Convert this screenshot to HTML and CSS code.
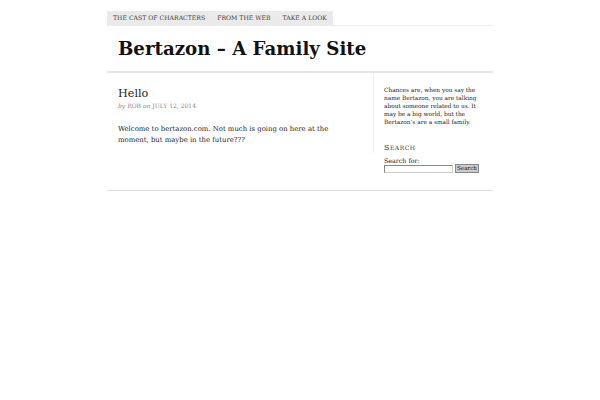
FILE: index.html
```html
<!DOCTYPE html>
<html>
<head>
<meta charset="utf-8">
<link rel="stylesheet" href="styles.css">
</head>
<body>
<div class="wrap">
  <nav class="nav">
    <a class="tab">The Cast of Characters</a>
    <a class="tab">From the Web</a>
    <a class="tab">Take a Look</a>
  </nav>
  <header class="header">
    <h1 class="title">Bertazon – A Family Site</h1>
  </header>
  <div class="main">
    <div class="content">
      <h2 class="post-title">Hello</h2>
      <div class="meta"><em>by</em> ROB <em>on</em> JULY 12, 2014</div>
      <p class="body">Welcome to bertazon.com. Not much is going on here at the moment, but maybe in the future???</p>
    </div>
    <aside class="sidebar">
      <p class="about">Chances are, when you say the name Bertazon, you are talking about someone related to us. It may be a big world, but the Bertazon’s are a small family.</p>
      <h3 class="widget-title">Search</h3>
      <div class="label">Search for:</div>
      <div class="search"><span class="input"></span><span class="btn">Search</span></div>
    </aside>
  </div>
</div>
</body>
</html>
```
FILE: styles.css
```css
html, body { margin: 0; padding: 0; background: #fff; }
body { font-family: "DejaVu Serif", serif; color: #333; }
.wrap { width: 386px; margin: 0 0 0 107px; }
.nav { display: flex; margin-top: 11px; border-bottom: 1px solid #eee; }
.tab { display: block; height: 14px; line-height: 14px; padding: 0 6px; background: #eaeaea; font-size: 6.15px; text-transform: uppercase; color: #3a3a3a; }
.header { height: 45px; border-bottom: 2px solid #e6e6e6; display: flex; align-items: center; }
.title { margin: 0 0 0 11px; font-size: 18.2px; font-weight: bold; color: #111; }
.main { display: flex; border-bottom: 1px solid #e0e0e0; height: 117px; }
.content { width: 225px; padding: 14px 30px 0 11px; }
.post-title { margin: 0; font-size: 11.2px; font-weight: normal; color: #222; line-height: 14px; }
.meta { font-size: 6px; color: #888; margin-top: 1px; }
.body { font-size: 6.9px; line-height: 11px; margin: 15px 0 0; color: #222; }
.sidebar { border-left: 1px solid #eee; padding: 13px 0 0 10px; width: 95px; height: 67px; }
.about { font-size: 5.8px; line-height: 8px; margin: 0; color: #222; }
.widget-title { font-variant: small-caps; font-weight: normal; font-size: 8px; margin: 17px 0 0; letter-spacing: 0.5px; color: #333; }
.label { font-size: 6.3px; margin-top: 5px; color: #222; }
.search { display: flex; align-items: center; gap: 2px; }
.input { display: block; width: 67px; height: 6px; border: 1px solid #888; border-right-color: #ccc; border-bottom-color: #ccc; }
.btn { display: block; font-size: 5.6px; background: #ccc; border: 1px solid #888; padding: 0 1px; line-height: 7px; color: #111; }
```
